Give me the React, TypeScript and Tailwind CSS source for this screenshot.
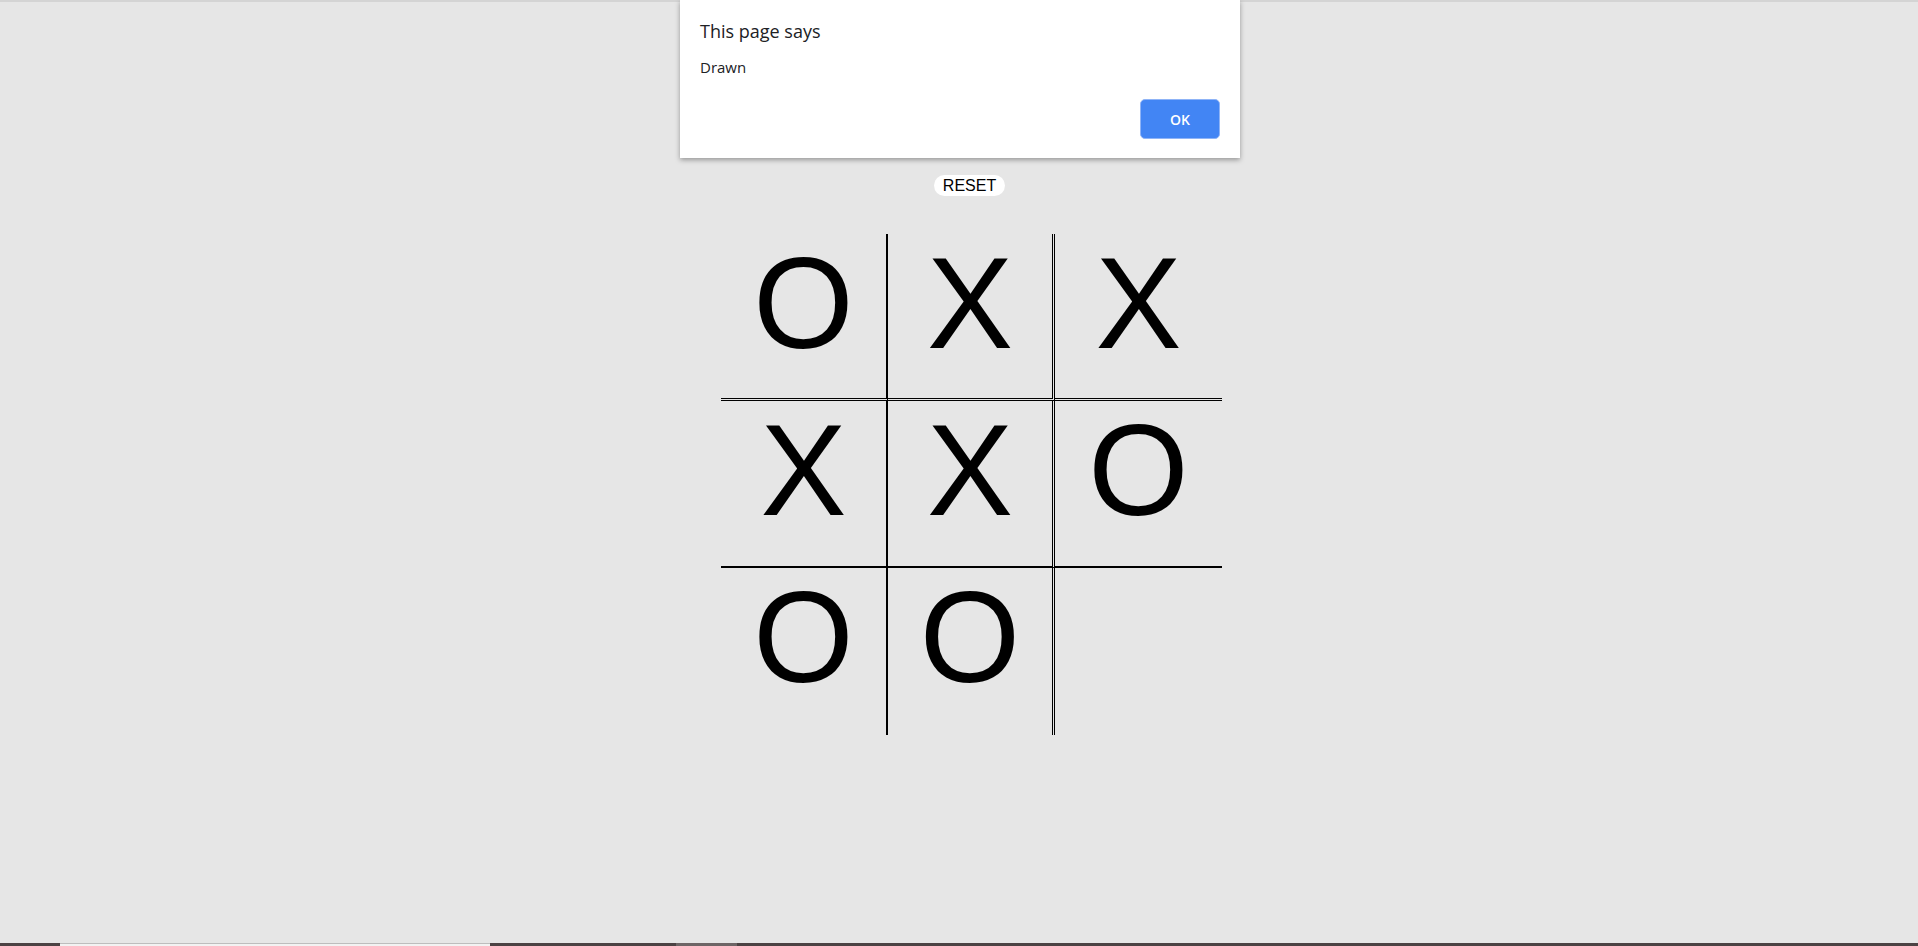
import React from 'react';

type Mark = 'X' | 'O' | '';

const board: Mark[] = ['O', 'X', 'X', 'X', 'X', 'O', 'O', 'O', ''];

// per-cell border classes, inner lines only
const cellBorders = [
  'border-r-2 [border-right-style:solid] border-b-[3px] [border-bottom-style:double]',
  'border-r-[3px] [border-right-style:double] border-b-[3px] [border-bottom-style:double]',
  'border-b-[3px] [border-bottom-style:double]',
  'border-r-2 [border-right-style:solid] border-b-2 [border-bottom-style:solid]',
  'border-r-[3px] [border-right-style:double] border-b-2 [border-bottom-style:solid]',
  'border-b-2 [border-bottom-style:solid]',
  'border-r-2 [border-right-style:solid]',
  'border-r-[3px] [border-right-style:double]',
  '',
];

const AlertDialog: React.FC<{ message: string }> = ({ message }) => (
  <div className="absolute top-0 left-[680px] w-[560px] h-[158px] bg-white shadow-[0_2px_5px_rgba(0,0,0,0.35)] font-['Open_Sans','Noto_Sans',sans-serif] text-[#202124]">
    <div className="pl-[20px] pt-[19px] text-[18px] leading-[24px]">This page says</div>
    <div className="pl-[20px] mt-[14px] text-[15px] leading-[20px]">{message}</div>
    <button className="absolute left-[460px] top-[99px] w-[80px] h-[40px] rounded-[5px] bg-[#4285f4] border border-[#8fb4f7] text-white text-[14px] font-semibold font-['Open_Sans','Noto_Sans',sans-serif]">
      OK
    </button>
  </div>
);

const App: React.FC = () => {
  return (
    <div className="relative w-full h-[946px] flex flex-col bg-[#e6e6e6] overflow-hidden">
      <div className="h-[2px] bg-[#d4d4d4]" />
      <div className="flex-1 flex flex-col items-center pl-[21px] pt-[173px] font-['Liberation_Sans',Arial,sans-serif]">
        <button className="px-[9px] py-[1px] text-[16px] leading-[19px] bg-white text-black rounded-full">
          RESET
        </button>
        <div className="mt-[38px] ml-[4px] grid grid-cols-[167px_167px_167px]">
          {board.map((mark, i) => (
            <div
              key={i}
              className={`w-[167px] h-[167px] border-black text-center text-[129px] leading-[138px] text-black ${cellBorders[i]}`}
            >
              {mark}
            </div>
          ))}
        </div>
      </div>
      <div className="h-[3px] flex">
        <div className="w-[60px] bg-[#4b4243]" />
        <div className="w-[430px] bg-[#f2f2f2] border-t border-[#bdbdbd]" />
        <div className="w-[186px] bg-[#4b4243]" />
        <div className="w-[61px] bg-[#6d6566]" />
        <div className="flex-1 bg-[#4b4243]" />
      </div>
      <AlertDialog message="Drawn" />
    </div>
  );
};

export default App;
